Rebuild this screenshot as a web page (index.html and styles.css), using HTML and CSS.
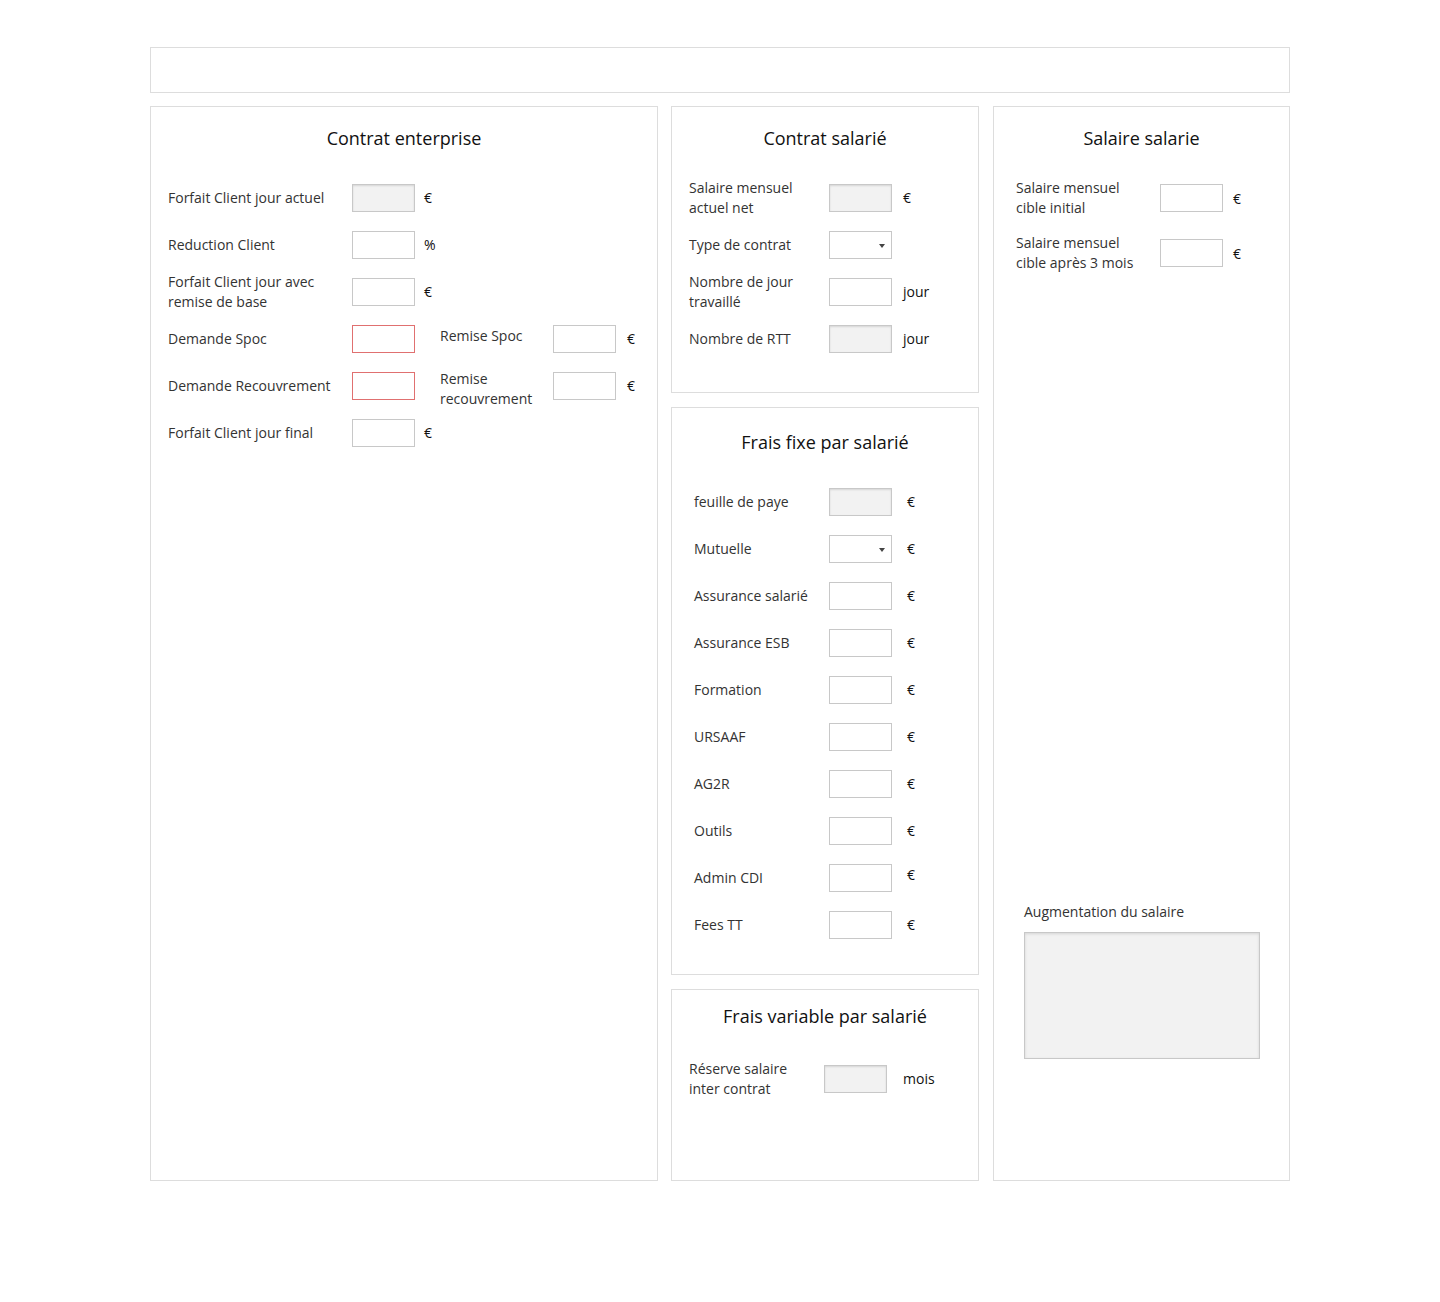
FILE: index.html
```html
<!DOCTYPE html>
<html lang="fr">
<head>
  <meta charset="UTF-8">
  <title>Simulateur salarié</title>
  <meta name="viewport" content="width=device-width, initial-scale=1.0">
  <link rel="stylesheet" href="styles.css">
</head>
<body>
  <div class="page">
    <div class="topbar"></div>

    <div class="columns">
      <!-- colonne 1 -->
      <section class="panel panel-enterprise">
        <h2>Contrat enterprise</h2>

        <div class="row">
          <label class="lbl">Forfait Client jour actuel</label>
          <input class="field readonly" type="text" readonly>
          <span class="unit">€</span>
        </div>
        <div class="row">
          <label class="lbl">Reduction Client</label>
          <input class="field" type="text">
          <span class="unit">%</span>
        </div>
        <div class="row">
          <label class="lbl">Forfait Client jour avec remise de base</label>
          <input class="field" type="text">
          <span class="unit">€</span>
        </div>
        <div class="row">
          <label class="lbl">Demande Spoc</label>
          <input class="field invalid" type="text">
          <label class="lbl2 up">Remise Spoc</label>
          <input class="field" type="text">
          <span class="unit unit-far">€</span>
        </div>
        <div class="row">
          <label class="lbl">Demande Recouvrement</label>
          <input class="field invalid" type="text">
          <label class="lbl2 down">Remise recouvrement</label>
          <input class="field" type="text">
          <span class="unit unit-far">€</span>
        </div>
        <div class="row">
          <label class="lbl">Forfait Client jour final</label>
          <input class="field" type="text">
          <span class="unit">€</span>
        </div>
      </section>

      <!-- colonne 2 -->
      <div class="stack">
        <section class="panel panel-contrat">
          <h2>Contrat salarié</h2>
          <div class="row">
            <label class="lbl">Salaire mensuel actuel net</label>
            <input class="field readonly" type="text" readonly>
            <span class="unit">€</span>
          </div>
          <div class="row">
            <label class="lbl">Type de contrat</label>
            <span class="select"><select class="field"><option></option></select></span>
          </div>
          <div class="row">
            <label class="lbl">Nombre de jour travaillé</label>
            <input class="field" type="text">
            <span class="unit">jour</span>
          </div>
          <div class="row">
            <label class="lbl">Nombre de RTT</label>
            <input class="field readonly" type="text" readonly>
            <span class="unit">jour</span>
          </div>
        </section>

        <section class="panel panel-fixe">
          <h2>Frais fixe par salarié</h2>
          <div class="row">
            <label class="lbl">feuille de paye</label>
            <input class="field readonly" type="text" readonly>
            <span class="unit">€</span>
          </div>
          <div class="row">
            <label class="lbl">Mutuelle</label>
            <span class="select"><select class="field"><option></option></select></span>
            <span class="unit">€</span>
          </div>
          <div class="row">
            <label class="lbl">Assurance salarié</label>
            <input class="field" type="text">
            <span class="unit">€</span>
          </div>
          <div class="row">
            <label class="lbl">Assurance ESB</label>
            <input class="field" type="text">
            <span class="unit">€</span>
          </div>
          <div class="row">
            <label class="lbl">Formation</label>
            <input class="field" type="text">
            <span class="unit">€</span>
          </div>
          <div class="row">
            <label class="lbl">URSAAF</label>
            <input class="field" type="text">
            <span class="unit">€</span>
          </div>
          <div class="row">
            <label class="lbl">AG2R</label>
            <input class="field" type="text">
            <span class="unit">€</span>
          </div>
          <div class="row">
            <label class="lbl">Outils</label>
            <input class="field" type="text">
            <span class="unit">€</span>
          </div>
          <div class="row">
            <label class="lbl">Admin CDI</label>
            <input class="field" type="text">
            <span class="unit up">€</span>
          </div>
          <div class="row">
            <label class="lbl">Fees TT</label>
            <input class="field" type="text">
            <span class="unit">€</span>
          </div>
        </section>

        <section class="panel panel-variable">
          <h2>Frais variable par salarié</h2>
          <div class="row">
            <label class="lbl">Réserve salaire inter contrat</label>
            <input class="field readonly" type="text" readonly>
            <span class="unit">mois</span>
          </div>
        </section>
      </div>

      <!-- colonne 3 -->
      <section class="panel panel-salaire">
        <h2>Salaire salarie</h2>
        <div class="row">
          <label class="lbl">Salaire mensuel cible initial</label>
          <input class="field" type="text">
          <span class="unit">€</span>
        </div>
        <div class="row">
          <label class="lbl">Salaire mensuel cible après 3 mois</label>
          <input class="field" type="text">
          <span class="unit">€</span>
        </div>

        <div class="raise">
          <label>Augmentation du salaire</label>
          <textarea readonly></textarea>
        </div>
      </section>
    </div>
  </div>
</body>
</html>
```

FILE: styles.css
```css
body {
  margin: 0;
  background: #fff;
  font-family: 'Open Sans', sans-serif;
  font-size: 14px;
  color: #333;
}
.page {
  width: 1140px;
  margin: 47px auto 0;
}
.topbar {
  height: 46px;
  box-sizing: border-box;
  border: 1px solid #ddd;
  margin-bottom: 13px;
}
.columns {
  display: grid;
  grid-template-columns: 508px 308px 298px;
  column-gap: 13px;
  height: 1075px;
}
.columns > .panel-salaire {
  margin-left: 1px;
}
.stack {
  display: flex;
  flex-direction: column;
  gap: 14px;
}
.panel {
  box-sizing: border-box;
  border: 1px solid #ddd;
  padding: 19px 0 0 17px;
  display: flex;
  flex-direction: column;
}
.panel h2 {
  margin: 0 0 24px;
  font-size: 18px;
  line-height: 24px;
  font-weight: normal;
  color: #111;
  text-align: center;
  padding-right: 17px;
}

/* rows */
.row {
  display: flex;
  align-items: center;
  height: 47px;
}
.lbl {
  flex: none;
  width: 184px;
  line-height: 20px;
  padding-right: 12px;
  box-sizing: border-box;
}
.lbl2 {
  flex: none;
  width: 113px;
  margin-left: 25px;
  line-height: 20px;
  padding-right: 8px;
  box-sizing: border-box;
}
.up { position: relative; top: -3px; }
.down { position: relative; top: 3px; }
.unit {
  margin-left: 9px;
  color: #111;
}
.unit-far { margin-left: 11px; }

.field {
  flex: none;
  width: 63px;
  height: 28px;
  box-sizing: border-box;
  border: 1px solid #c8c8c8;
  background: #fff;
  margin: 0;
  padding: 0 4px;
  font: inherit;
  border-radius: 0;
}
.field.readonly {
  background: #f2f2f2;
  box-shadow: inset 0 1px 2px rgba(0, 0, 0, 0.12);
}
.field.invalid {
  border-color: #e07070;
}
.select {
  position: relative;
  flex: none;
  display: block;
  width: 63px;
  height: 28px;
}
.select select {
  appearance: none;
  -webkit-appearance: none;
  display: block;
}
.select::after {
  content: "";
  position: absolute;
  right: 7px;
  top: 13px;
  border-left: 3px solid transparent;
  border-right: 3px solid transparent;
  border-top: 4px solid #444;
}

/* colonne 2 */
.panel-contrat {
  height: 287px;
}
.panel-contrat .lbl { width: 140px; }
.panel-contrat .unit { margin-left: 11px; }

.panel-fixe {
  height: 568px;
  padding-top: 22px;
  padding-left: 22px;
}
.panel-fixe h2 { padding-right: 22px; }
.panel-fixe .lbl { width: 135px; }
.panel-fixe .unit { margin-left: 15px; }

.panel-variable {
  flex: 1;
  padding-top: 14px;
}
.panel-variable h2 { margin-bottom: 27px; }
.panel-variable .lbl { width: 135px; }
.panel-variable .unit { margin-left: 16px; }

/* colonne 3 */
.panel-salaire {
  padding-left: 22px;
}
.panel-salaire h2 {
  margin-bottom: 28px;
  padding-right: 22px;
}
.panel-salaire .row {
  height: 40px;
  margin-bottom: 15px;
}
.panel-salaire .lbl { width: 144px; }
.panel-salaire .unit { margin-left: 10px; }

.raise {
  margin-top: auto;
  margin-left: 8px;
  padding-bottom: 121px;
  display: flex;
  flex-direction: column;
}
.raise label {
  line-height: 20px;
  margin-bottom: 10px;
}
.raise textarea {
  width: 236px;
  height: 127px;
  box-sizing: border-box;
  border: 1px solid #c8c8c8;
  background: #f2f2f2;
  box-shadow: inset 0 1px 3px rgba(0, 0, 0, 0.12);
  resize: none;
  margin: 0;
  font: inherit;
}
```
